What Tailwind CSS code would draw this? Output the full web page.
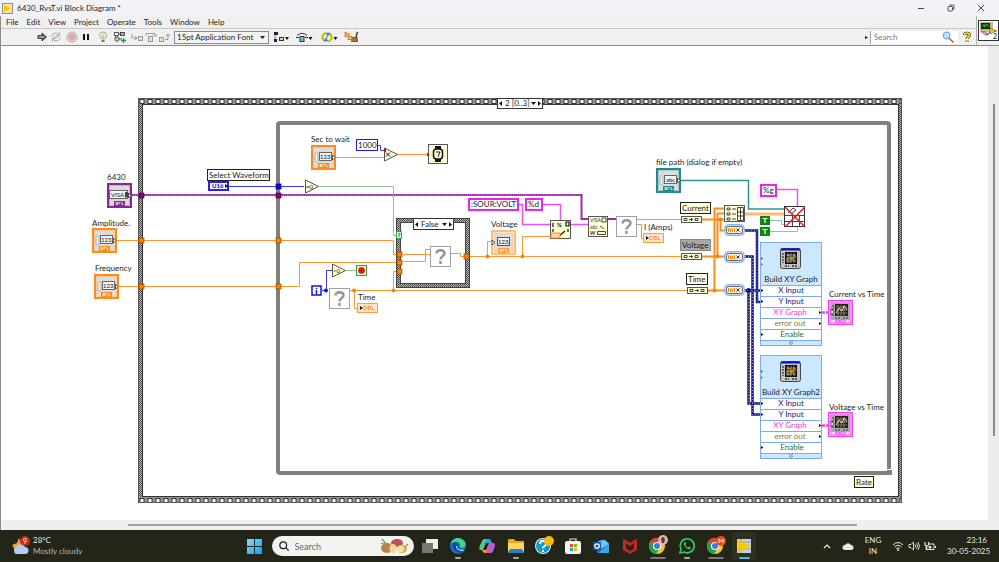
<!DOCTYPE html>
<html lang="en">
<head>
    <meta charset="UTF-8">
    <meta name="viewport" content="width=device-width, initial-scale=1.0">
    <title>6430_RvsT.vi Block Diagram</title>
    <script src="https://cdn.jsdelivr.net/npm/@tailwindcss/browser@4"></script>
</head>
<body class="flex h-screen flex-col overflow-hidden bg-[#f0f0f0] font-['Lato',sans-serif] text-[8px] text-[#1c1c1c]">

    <!-- Title bar -->
    <header class="flex h-[16px] shrink-0 items-center bg-[#f1f3f9]">
        <svg class="ml-[2px] size-[11px]" viewBox="0 0 11 11"><rect x=".5" y=".5" width="10" height="10" fill="#fbe9a0" stroke="#8a8f9c"/><path d="M2 2l7 3.500L2 9z" fill="#f8c800"/></svg>
        <h1 class="ml-[4px] flex-1 whitespace-nowrap">6430_RvsT.vi Block Diagram *</h1>
        <div class="mr-[3px] flex">
            <button aria-label="Minimize" class="flex h-[16px] w-[30px] items-center justify-center"><svg class="size-[8px]" viewBox="0 0 8 8"><path d="M1 4.500h6" stroke="#333" stroke-width=".9"/></svg></button>
            <button aria-label="Restore" class="flex h-[16px] w-[30px] items-center justify-center"><svg class="size-[8px]" viewBox="0 0 8 8" fill="none" stroke="#333" stroke-width=".9"><rect x="1" y="2.500" width="4.500" height="4.500" rx="1"/><path d="M2.500 1h3Q7 1 7 2.500v3"/></svg></button>
            <button aria-label="Close" class="flex h-[16px] w-[30px] items-center justify-center"><svg class="size-[8px]" viewBox="0 0 8 8"><path d="M1 1l6 6M7 1L1 7" stroke="#333" stroke-width=".9"/></svg></button>
        </div>
    </header>

    <div class="flex h-[30px] shrink-0 border-b border-l border-[#8c8c8c]">
        <div class="flex min-w-0 flex-1 flex-col">
            <!-- Menu -->
            <nav class="flex h-[13px] items-center gap-[8px] border-b border-[#c8c8c8] pl-[5px]">
                <a href="#">File</a><a href="#">Edit</a><a href="#">View</a><a href="#">Project</a><a href="#">Operate</a><a href="#">Tools</a><a href="#">Window</a><a href="#">Help</a>
            </nav>
            <!-- Toolbar -->
            <div class="flex flex-1 items-center pl-[34px]">
                <div class="flex">
                    <button aria-label="Run" class="w-[14px]"><svg class="h-[12px] w-[14px]" viewBox="0 0 14 12"><path d="M3 4.500h4V2l4.500 4L7 10V7.500H3z" fill="#666" stroke="#222" stroke-width=".8"/><path d="M4 6h5" stroke="#eee" stroke-width=".9"/></svg></button>
                    <button aria-label="Run Continuously" class="w-[14px]"><svg class="h-[12px] w-[14px]" viewBox="0 0 14 12" fill="none" stroke="#a2a2a2" stroke-width="1"><path d="M2.500 5.500C3 2 8 1 10.500 4M11.500 6.500C11 10 6 11 3.500 8M10.500 1.500V4.500H7.500M3.500 10.500V7.500h3"/><path d="M4.500 6h5"/></svg></button>
                </div>
                <div class="ml-[2px] flex">
                    <button aria-label="Abort" class="w-[14px]"><svg class="h-[12px] w-[14px]" viewBox="0 0 14 12"><circle cx="7" cy="6" r="5" fill="#e0d0d0" stroke="#b0a4a4" stroke-width=".8"/><path d="M5.500 3h3l1.500 1.500v3L8.500 9h-3L4 7.500v-3z" fill="#e8a4a4"/></svg></button>
                    <button aria-label="Pause" class="w-[14px]"><svg class="h-[12px] w-[14px]" viewBox="0 0 14 12"><path d="M5 3v6M9 3v6" stroke="#111" stroke-width="2"/></svg></button>
                </div>
                <button aria-label="Highlight Execution" class="ml-[3px] w-[14px]"><svg class="h-[12px] w-[14px]" viewBox="0 0 14 12"><path d="M5.500 8C3.500 6 3 4.500 3.500 3.200 4.500.4 9.500.4 10.500 3.200 11 4.500 10.500 6 8.500 8z" fill="#ece8d0" stroke="#999" stroke-width=".8"/><path d="M5.500 9h3v2h-3z" fill="#777"/><path d="M6 7.500L7 4l1 3.500" stroke="#b9a860" stroke-width=".6" fill="none"/></svg></button>
                <button aria-label="Retain Wire Values" class="ml-[3px] w-[14px]"><svg class="h-[12px] w-[14px]" viewBox="0 0 14 12" fill="none" stroke="#333" stroke-width=".8"><rect x="1.500" y="1.500" width="4" height="3" fill="#fff"/><rect x="7.500" y="1.500" width="4" height="3" fill="#9ab"/><circle cx="4" cy="8" r="2.200" fill="#ccc"/><path d="M5.500 3h2M3 5v2M6 8h3"/><path d="M8 9.500h5M10.500 7v5" stroke="#1aa01a" stroke-width="1.300"/></svg></button>
                <div class="ml-[3px] flex">
                    <button aria-label="Step Into" class="w-[14px]"><svg class="h-[12px] w-[14px]" viewBox="0 0 14 12" fill="none" stroke="#9a9a9a"><path d="M2 3v4h5M5 5l2 2-2 2"/><rect x="8.500" y="5.500" width="4" height="4" fill="#e6e2b4"/></svg></button>
                    <button aria-label="Step Over" class="w-[14px]"><svg class="h-[12px] w-[14px]" viewBox="0 0 14 12" fill="none" stroke="#9a9a9a"><path d="M2 5V2.500h9V5M9 3.500l2 2 2-2"/><rect x="4.500" y="5.500" width="4" height="5" fill="#e6e2b4"/></svg></button>
                    <button aria-label="Step Out" class="w-[14px]"><svg class="h-[12px] w-[14px]" viewBox="0 0 14 12" fill="none" stroke="#9a9a9a"><rect x="1.500" y="6.500" width="4" height="4" fill="#e6e2b4"/><path d="M7 8.500h3V3M8 5l2-2 2 2"/></svg></button>
                </div>
                <label class="relative ml-[2px] block">
                    <select aria-label="Text settings" class="block h-[13px] w-[95px] appearance-none border border-[#8a8a8a] bg-[#f4f4f4] pl-[2px] text-[8px] leading-[11px]"><option>15pt Application Font</option></select>
                    <svg class="absolute top-[5px] right-[4px] h-[3px] w-[5px]" viewBox="0 0 5 3"><path d="M0 0h5L2.500 3z" fill="#222"/></svg>
                </label>
                <div class="ml-[4px] flex gap-[6px]">
                    <button aria-label="Align Objects"><svg class="h-[12px] w-[17px]" viewBox="0 0 17 12"><path d="M1 1h4v3H1zM1 8h3v3H1z" fill="#223"/><path d="M2 4v4" stroke="#39c"/><rect x="6.500" y="6.500" width="4" height="3" fill="#d8d8a0" stroke="#333"/><path d="M12 6h4l-2 3z" fill="#111"/></svg></button>
                    <button aria-label="Distribute Objects"><svg class="h-[12px] w-[17px]" viewBox="0 0 17 12"><path d="M1 4.500Q6 0 11 4.500" fill="none" stroke="#333"/><path d="M0 6.500h3M9 6.500h3" fill="none" stroke="#333"/><rect x="4" y="5.500" width="4" height="5" fill="#7cc4cc" stroke="#333"/><path d="M12.500 6h4l-2 3z" fill="#111"/></svg></button>
                </div>
                <button aria-label="Reorder" class="ml-[8px]"><svg class="h-[12px] w-[17px]" viewBox="0 0 17 12" fill="none"><path d="M5 2C1 3 0 8 4 10M7 10.500c4-1 5-6 1-8" stroke="#d0b800" stroke-width="2"/><path d="M5 2.500h3l-2 3M7 9.500H4l2-3" stroke="#2a8cb0" stroke-width="1.500"/><path d="M12.500 6h4l-2 3z" fill="#111"/></svg></button>
                <button aria-label="Clean Up Diagram" class="ml-[6px]"><svg class="h-[12px] w-[15px]" viewBox="0 0 15 12"><path d="M1 1l5 2.500L1 6zM4 5.500h4v3H4z" fill="#f0d020" stroke="#c33" stroke-width=".6"/><path d="M13.500 1L12 6" stroke="#5a3a10" stroke-width="1.500"/><path d="M8 6h5.500l.5 5H7z" fill="#8a5a20"/><path d="M9 7v3M11 7v3" stroke="#dcb060" stroke-width=".7"/></svg></button>
                <form class="ml-auto flex items-center" onsubmit="return false">
                    <svg class="mr-[2px] h-[5px] w-[3px]" viewBox="0 0 3 5"><path d="M0 1l3 1.500L0 4z" fill="#111"/></svg>
                    <label class="flex h-[13px] w-[88px] items-center border-l border-[#a0a0a0] bg-white pr-[4px]">
                        <input type="text" aria-label="Search" placeholder="Search" class="h-[11px] min-w-0 flex-1 pl-[3px] text-[8px] outline-none placeholder:text-[#777]">
                        <svg class="size-[12px]" viewBox="0 0 12 12"><path d="M7 7l4 4" stroke="#b5651d" stroke-width="1.600" stroke-linecap="round"/><circle cx="4.500" cy="4.500" r="3.300" fill="#bfe2fa" stroke="#6da7dc" stroke-width="1.200"/></svg>
                    </label>
                </form>
                <button aria-label="Help" class="mr-[4px] ml-[4px]"><svg class="h-[12px] w-[10px]" viewBox="0 0 10 12" fill="none"><path d="M2.500 4C2.500 1.500 7.500 1.500 7.500 4 7.500 6 5 6 5 8M5 9.500v1.500" stroke="#333" stroke-width="3"/><path d="M2.500 4C2.500 1.500 7.500 1.500 7.500 4 7.500 6 5 6 5 8M5 9.500v1.500" stroke="#f2e200" stroke-width="1.800"/></svg></button>
            </div>
        </div>
        <!-- VI icon -->
        <div class="w-[23px] border-l border-[#b0b0b0] pt-[4px] pl-px">
            <svg class="size-[21px]" viewBox="0 0 21 21"><rect x=".5" y=".5" width="20" height="20" fill="#fff" stroke="#333"/><rect x="2" y="2" width="13" height="10" fill="#c9b1a0"/><rect x="3" y="3" width="9" height="6" fill="#082808"/><path d="M4 7l2-3 1 3 2-3 2 3" fill="none" stroke="#28e038" stroke-width=".9"/><path d="M3 12h4l2 2 5-3h5" fill="none" stroke="#e03030"/><path d="M5 13l3 2 3-1" fill="none" stroke="#3060e0"/><path d="M12 8l6 3-6 3z" fill="#f0d800" stroke="#333" stroke-width=".5"/><text x="15" y="19" font-size="7" fill="#111">2</text></svg>
        </div>
    </div>

    <div class="flex min-h-0 flex-1 border-l border-[#8c8c8c]">
        <!-- Block diagram canvas -->
        <main class="relative min-w-0 flex-1 overflow-hidden bg-white">
            <svg class="block h-[474px] w-[987px]" viewBox="1 46 987 474" fill="none">
                <defs>
                    <pattern id="film" x="138" y="98" width="8" height="7" patternUnits="userSpaceOnUse"><rect width="8" height="7" fill="#949494"/><rect x="2" y="1.500" width="4" height="4" fill="#fff" stroke="#333"/></pattern>
                    <pattern id="film-bottom" x="138" y="497" width="8" height="7" patternUnits="userSpaceOnUse"><rect width="8" height="7" fill="#949494"/><rect x="2" y="1.500" width="4" height="4" fill="#fff" stroke="#333"/></pattern>
                    <pattern id="hatch" width="2" height="2" patternUnits="userSpaceOnUse"><rect width="2" height="2" fill="#b8b8b8"/><path d="M0 0h1v1H0zM1 1h1v1H1z" fill="#4a4a4a"/></pattern>
                    <g id="control">
                        <rect x="1" y="1" width="23" height="23" fill="#fff" stroke="currentColor" stroke-width="2"/>
                        <rect x="2.500" y="2.500" width="20" height="20" fill="#dcdcdc" stroke="currentColor" stroke-opacity=".35"/>
                        <rect x="4" y="8" width="3" height="9" rx="1.500" fill="#eee" stroke="#999" stroke-width=".7"/>
                        <rect x="8.500" y="7.500" width="12" height="8" fill="#f4f4f4" stroke="#666"/>
                        <path d="M21.500 10l2.500 2.500-2.500 2.500z" fill="#fff" stroke="#333" stroke-width=".8"/>
                        <rect x="7" y="18" width="11" height="5" fill="currentColor"/>
                        <path d="M9 21.500v-2h1.500v2zM12 21.500v-2h1.500M15 19v2.500h1.500" stroke="#fff" stroke-width=".8"/>
                    </g>
                    <g id="graph-control">
                        <rect x="1.500" y="1.500" width="22" height="22" fill="#ddd" stroke="#ff90ff" stroke-width="3"/>
                        <rect x=".5" y=".5" width="24" height="24" stroke="#f040f0"/>
                        <rect x="3" y="3" width="19" height="17" fill="#a8a8a8"/>
                        <rect x="7" y="4" width="13" height="12" fill="#2a2018"/>
                        <path d="M8 7h11M8 10h11M8 13h11M10 5v11M13 5v11M16 5v11" stroke="#a89878" stroke-width=".7"/>
                        <path d="M8 13l3-5 3 3 2-5 3 4" stroke="#fff" stroke-width=".8"/>
                        <path d="M5 5v11M7 18h5M15 18h5" stroke="#333" stroke-dasharray="2 1"/>
                        <path d="M3 9l3 3-3 3z" fill="#fff" stroke="#333" stroke-width=".8"/>
                        <path d="M8 20h3v2H8zM12 20h5v2h-5z" fill="#fff" stroke="#f040f0"/>
                    </g>
                    <g id="plot-icon">
                        <rect x=".5" y=".5" width="20" height="20" rx="2" fill="#c4c4c4" stroke="#444"/>
                        <path d="M1 1.500h19" stroke="#1010c0" stroke-width="2"/>
                        <rect x="5" y="4" width="12" height="12" fill="#111"/>
                        <path d="M6 7h10M6 10h10M6 13h10M8 5v10M11 5v10M14 5v10" stroke="#bbb" stroke-width=".7"/>
                        <path d="M6 12l3-2 2 2 3-5 2 2M7 7l3 1 4 5M7 14l3-1" stroke="#e0b000" stroke-width=".9"/>
                        <path d="M3 5v10M5 18h4M12 18h5" stroke="#333" stroke-width="1.300" stroke-dasharray="2 1"/>
                    </g>
                    <g id="converter"><rect x=".5" y=".5" width="20" height="6" fill="#ffffd8" stroke="#555"/><path d="M3 2.500h3v2H3zM14 2.500h3v2h-3zM8 3.500h4M10.500 2v3" stroke="#333" stroke-width=".9"/></g>
                    <g id="dynamic"><rect x=".5" y=".5" width="20" height="11" rx="4" fill="#b8d4ff" stroke="#8ab4f0"/><rect x="2.500" y="2.500" width="16" height="7" rx="2" fill="#fff4d0" stroke="#667"/><path d="M4.500 4v4M6.500 8V5h2v3M10.500 4v4" stroke="#ff8000"/><path d="M12.500 4.500l3 3M15.500 4.500l-3 3" stroke="#224" stroke-width=".9"/></g>
                    <g id="unknown"><rect x=".5" y=".5" width="20" height="20" fill="#fff" stroke="#a0a0a0"/><path d="M6.500 7.500C6.500 3 14.500 3 14.500 7.500 14.500 10 10.500 10 10.500 13.500M10.500 15v3" stroke="#969696" stroke-width="2.500"/></g>
                    <g id="dbl"><rect x=".5" y=".5" width="20" height="9" fill="#fff" stroke="#ff9c40"/><rect x="2" y="2" width="17" height="6" stroke="#ffc890"/><path d="M3 3l3 2-3 2z" fill="#111"/></g>
                </defs>

                <!-- Stacked sequence frame -->
                <path d="M138 98H902V503H138zM143 105V496H898V105z" fill="url(#hatch)" fill-rule="evenodd"/>
                <rect x="138" y="98" width="764" height="7" fill="url(#film)"/>
                <rect x="138" y="497" width="764" height="6" fill="url(#film-bottom)"/>
                <rect x="138.500" y="98.500" width="763" height="404" stroke="#555"/>
                <rect x="142.500" y="104.500" width="756" height="392" stroke="#333"/>

                <!-- While loop -->
                <rect x="278" y="123" width="611" height="350" rx="2" stroke="#808080" stroke-width="4"/>
                <path d="M887 469.500h4" stroke="#fff"/><path d="M887 470h5v5h-5z" fill="#808080"/>

                <!-- Numeric wires -->
                <g stroke="#ff9632">
                    <path d="M116 240.500H393.500V254.500H399M118 286.500H299.500V262.500H399M335 157.500H384M397 154.500H428"/>
                    <path d="M350 290.500H687M354.500 290V308.500H357M393.500 290V271.500H399"/>
                    <path d="M470 256.500H682M487.500 256V241.500H492M522.500 256V236.500H550M637 219.500H682M637 224.500H641.500V238.500H644"/>
                    <path d="M702 219.500H724M702 256.500H724M707 290.500H724M714.500 290V208.500H724M717.500 256V213.500H724M720.500 219V230.500H724" stroke="#ff8c1a" stroke-width="2"/>
                    <path d="M744 214H785" stroke="#ffb878" stroke-width="3"/>
                </g>
                <g fill="#ff8000"><circle cx="354" cy="290.500" r="2"/><circle cx="393.500" cy="290.500" r="2"/><circle cx="487.500" cy="256.500" r="2"/><circle cx="522.500" cy="256.500" r="2"/><circle cx="714.500" cy="290.500" r="2"/><circle cx="717.500" cy="256.500" r="2"/><circle cx="720.500" cy="219.500" r="2"/></g>

                <!-- VISA, path, string, boolean and integer wires -->
                <path d="M131 195H581.500V219H588M608 219H617" stroke="#9c2ca0" stroke-width="2"/>
                <path d="M131 195H581" stroke="#e0b0e0" stroke-width=".7" stroke-dasharray="1 1"/>
                <path d="M680 180.500H748.500V209H785" stroke="#2a9490" stroke-width="1.500"/>
                <path d="M518 204.500H522.500V224.500H550M542 204.500H560.500V221M571 224.500H588M776 189.500H797.500V206" stroke="#f050f0" stroke-width="1.500"/>
                <path d="M318 186.500H393.500V235.500H399M346 270.500H356M770 220.500H781.500V224.500H785M770 231.500H797.500V227" stroke="#94c494"/>
                <path d="M229 186.500H304M377 145.500H380.500V150.500H384M322 290.500H326.500V270.500H332" stroke="#3838ff"/>
                <circle cx="326" cy="290.500" r="2" fill="#1010e0"/>

                <!-- Dynamic data wires -->
                <path d="M745 230.500H757V302H760M745 256.500H752.500V414.500H760M745 290.500H760M748.500 290V403.500H760" stroke="#181884" stroke-width="2.500"/>
                <path d="M745 230.500H757V302H760M745 256.500H752.500V414.500H760M745 290.500H760M748.500 290V403.500H760" stroke="#a8a8e0" stroke-width=".8" stroke-dasharray="1 2"/>
                <circle cx="748.500" cy="290.500" r="2.500" fill="#181884"/>
                <path d="M822 312.500H830M822 425.500H830" stroke="#f040f0" stroke-width="2.500" stroke-dasharray="3 1"/>

                <!-- Case structure -->
                <rect x="399" y="221" width="69" height="65" stroke="url(#hatch)" stroke-width="4"/>
                <rect x="396.500" y="218.500" width="73" height="69" stroke="#444"/>
                <rect x="400.500" y="222.500" width="65" height="61" stroke="#444"/>
                <path d="M403 254.500H430M403 261.500H425.500V249.500H430M451 253.500H460.500V256.500H464" stroke="#ff9632"/>

                <!-- Tunnels -->
                <g fill="#ff8000" stroke="#8a4a00" stroke-width=".7">
                    <rect x="139" y="238" width="5" height="5"/><rect x="139" y="284" width="5" height="5"/>
                    <rect x="276" y="238" width="5" height="5"/><rect x="276" y="284" width="5" height="5"/>
                    <rect x="397" y="252" width="5" height="5"/><rect x="397" y="260" width="5" height="5"/><rect x="397" y="269" width="5" height="5"/><rect x="464" y="254" width="5" height="5"/>
                </g>
                <path d="M139 193h5v5h-5zM276 193h5v5h-5z" fill="#800080" stroke="#400040" stroke-width=".7"/>
                <rect x="276" y="184" width="5" height="5" fill="#0000f0" stroke="#000080" stroke-width=".7"/>
                <rect x="396.500" y="231.500" width="5" height="7" fill="#d8f4d8" stroke="#40a840"/><path d="M398 233.500h2v1.500h-1v2" stroke="#208020" stroke-width=".7"/>

                <!-- Front panel terminals -->
                <use href="#control" x="107" y="183" color="#8e2499"/>
                <use href="#control" x="92" y="228" color="#ff8c1a"/>
                <use href="#control" x="94" y="274" color="#ff8c1a"/>
                <use href="#control" x="311" y="145" color="#ff8c1a"/>
                <use href="#control" x="656" y="168" color="#1f8c8c"/>
                <g transform="translate(491 230)">
                    <rect x="1" y="1" width="23" height="23" fill="#fff" stroke="#ffa850" stroke-width="1.500"/>
                    <rect x="3" y="3" width="19" height="19" fill="#dcdcdc" stroke="#ffc890"/>
                    <rect x="6.500" y="7.500" width="12" height="8" fill="#f4f4f4" stroke="#555"/>
                    <path d="M1 10l3 2.500L1 15z" fill="#fff" stroke="#333" stroke-width=".8"/>
                    <rect x="7" y="18" width="11" height="5" fill="#ff9c3c"/><path d="M9 21.500v-2h1.500v2zM12 21.500v-2h1.500M15 19v2.500h1.500" stroke="#fff" stroke-width=".8"/>
                </g>
                <rect x="109.500" y="190.500" width="18" height="8" fill="#f4f4f4" stroke="#666"/>
                <path d="M125 192h2l2 2.500-2 3h-2z" fill="#444"/>
                <g fill="#111" font-size="6">
                    <text x="111" y="197">VISA</text>
                    <text x="101" y="242">123</text>
                    <text x="103" y="288">123</text>
                    <text x="320" y="159">123</text>
                    <text x="498" y="244">123</text>
                    <text x="666" y="182">abc</text>
                </g>
                <use href="#graph-control" x="828" y="300"/>
                <use href="#graph-control" x="828" y="412"/>
                <use href="#dbl" x="357" y="303"/>
                <use href="#dbl" x="643" y="233"/>
                <g fill="#ff8000" font-size="6" font-weight="700"><text x="363" y="310">DBL</text><text x="649" y="240">DBL</text></g>
                <rect x="209" y="182" width="19" height="8" fill="#fff" stroke="#2020ff" stroke-width="2"/><path d="M225 184l3 2-3 2z" fill="#111"/>
                <text x="212" y="188" font-size="6" font-weight="700" fill="#0000d0">U16</text>

                <!-- Functions -->
                <g fill="#ffffd8" stroke="#555">
                    <path d="M305.500 180v13l13-6.500zM384.500 148v13l13-6.500zM332.500 264v13l13-6.500z"/>
                    <rect x="428.500" y="144.500" width="19" height="19"/>
                    <rect x="550.500" y="220.500" width="20" height="18"/>
                    <rect x="588.500" y="216.500" width="19" height="20"/>
                    <rect x="724.500" y="205.500" width="20" height="16"/>
                </g>
                <g fill="#111" font-size="6"><text x="306" y="189">=0</text><text x="333" y="273">&lt;0</text></g>
                <path d="M386 152.500l4 4M390 152.500l-4 4" stroke="#111"/>
                <path d="M384 149h2v3h-2zM427 153h2v3h-2z" fill="#f00000"/>
                <path d="M435 146h6v3h-6zM435 159h6v3h-6z" fill="#111"/><rect x="433.500" y="149" width="9" height="10" rx="3" fill="#ffffd8" stroke="#111" stroke-width="1.500"/><path d="M436 152h4l-2 5" stroke="#111" stroke-width=".9"/>
                <path d="M553 223v4M553 229v3M568 229v3M566 222h3v4h-3zM558 237l7-6" stroke="#111" stroke-width="1.200"/><text x="557" y="227" font-size="6" font-weight="700" fill="#111">%</text><rect x="551" y="233" width="9" height="5" fill="#ffd8a8" stroke="#ff8c1a"/>
                <g fill="#333" font-size="5"><text x="590" y="222">VISA</text><text x="590" y="229">abc</text><text x="590" y="235" font-weight="700">W</text></g>
                <path d="M600 226l4 3M597.500 231.500h8v3h-8zM602 218h4v4h-4z" stroke="#333" stroke-width=".9"/>
                <path d="M727 208h3v2h-3zM727 213h3v2h-3zM727 218h3v2h-3zM732 209h4M732 214h4M732 219h4M737.500 207.500h6v13h-6zM740.500 208v12M738 212h5M738 216h5" stroke="#333" stroke-width=".9"/>
                <use href="#unknown" x="329" y="288"/>
                <use href="#unknown" x="430" y="246"/>
                <use href="#unknown" x="616" y="216"/>
                <use href="#converter" x="681" y="216"/>
                <use href="#converter" x="681" y="253"/>
                <use href="#converter" x="687" y="287"/>
                <use href="#dynamic" x="724" y="224"/>
                <use href="#dynamic" x="724" y="251"/>
                <use href="#dynamic" x="724" y="284"/>
                <rect x="784.500" y="206.500" width="20" height="20" fill="#fff" stroke="#333"/>
                <path d="M785 215.500h20M785 221.500h20M792.500 216v11M799.500 216v11M788 213l5-5 3 2-5 4" stroke="#333" stroke-width=".9"/>
                <path d="M785 207l20 20M805 207l-20 20" stroke="#f01818" stroke-width="1.500"/>

                <!-- Loop terminals -->
                <rect x="312" y="286" width="9" height="9" fill="#fff" stroke="#1010e0" stroke-width="1.500"/><path d="M316.500 288v1M316.500 290v4" stroke="#1010e0" stroke-width="1.500"/>
                <rect x="356.500" y="265.500" width="10" height="10" fill="#d8f0d8" stroke="#40a040"/><circle cx="361.500" cy="270.500" r="3.300" fill="#f01010"/>

                <!-- Constants -->
                <rect x="356.500" y="139.500" width="21" height="11" fill="#fff" stroke="#1818f0"/>
                <g fill="#fff" stroke="#f020f0" stroke-width="2"><rect x="469" y="199" width="49" height="11"/><rect x="526" y="199" width="16" height="11"/><rect x="761" y="185" width="15" height="11"/></g>
                <g fill="#0a8a0a"><rect x="760" y="216" width="10" height="9"/><rect x="760" y="227" width="10" height="9"/></g>
                <path d="M762.500 218.500h5M765 218.500v4.500M762.500 229.500h5M765 229.500v4.500" stroke="#fff" stroke-width="1.200"/>

                <!-- Label boxes -->
                <rect x="207.500" y="169.500" width="62" height="11" fill="#fff" stroke="#222"/>
                <g fill="#ffffe0" stroke="#222"><rect x="680.500" y="202.500" width="30" height="11"/><rect x="686.500" y="273.500" width="21" height="11"/><rect x="854.500" y="476.500" width="19" height="11"/></g>
                <rect x="680.500" y="239.500" width="30" height="11" fill="#a8a8a8" stroke="#888"/>

                <!-- Build XY Graph express VIs -->
                <g id="graph-1">
                    <rect x="760.500" y="242.500" width="61" height="103" fill="#cce8ff" stroke="#7ca8f4"/>
                    <rect x="761" y="285" width="60" height="55" fill="#fff"/>
                    <path d="M761 285.500h60M761 296.500h60M761 307.500h60M761 318.500h60M761 329.500h60M761 340.500h60" stroke="#7ca8f4"/>
                    <use href="#plot-icon" x="780" y="248"/>
                    <path d="M789 341l2 1.500 2-1.500M789 343l2 1.500 2-1.500" stroke="#889"/>
                    <path d="M761 257l2 1.500-2 1.500z" fill="#0a8a0a"/><path d="M761 263l2 1.500-2 1.500z" fill="#8a8000"/>
                    <path d="M761 289l2.500 1.500-2.500 1.500zM761 300l2.500 1.500-2.500 1.500zM819 311l2.500 1.500-2.500 1.500zM819 322l2.500 1.500-2.500 1.500zM761 333l2.500 1.500-2.500 1.500z" fill="#111"/>
                </g>
                <use href="#graph-1" y="113"/>
                <g font-size="8" text-anchor="middle">
                    <text x="791" y="282" fill="#222">Build XY Graph</text>
                    <text x="791" y="293" fill="#181884">X Input</text>
                    <text x="791" y="304" fill="#181884">Y Input</text>
                    <text x="790" y="315" fill="#f030f0">XY Graph</text>
                    <text x="790" y="326" fill="#867c10">error out</text>
                    <text x="792" y="337" fill="#0a8020">Enable</text>
                    <text x="791" y="395" fill="#222">Build XY Graph2</text>
                    <text x="791" y="406" fill="#181884">X Input</text>
                    <text x="791" y="417" fill="#181884">Y Input</text>
                    <text x="790" y="428" fill="#f030f0">XY Graph</text>
                    <text x="790" y="439" fill="#867c10">error out</text>
                    <text x="792" y="450" fill="#0a8020">Enable</text>
                </g>

                <!-- Labels -->
                <g fill="#1c1c1c" font-size="8">
                    <text x="107" y="180">6430</text>
                    <text x="92" y="226">Amplitude.</text>
                    <text x="95" y="271">Frequency</text>
                    <text x="209" y="178">Select Waveform</text>
                    <text x="311" y="142">Sec to wait</text>
                    <text x="358" y="148">1000</text>
                    <text x="358" y="300">Time</text>
                    <text x="471" y="207">:SOUR:VOLT</text>
                    <text x="528" y="207">%d</text>
                    <text x="763" y="193">%g</text>
                    <text x="491" y="227">Voltage</text>
                    <text x="644" y="230">I (Amps)</text>
                    <text x="656" y="165">file path (dialog if empty)</text>
                    <text x="682" y="211">Current</text>
                    <text x="682" y="248">Voltage</text>
                    <text x="688" y="282">Time</text>
                    <text x="829" y="297">Current vs Time</text>
                    <text x="829" y="410">Voltage vs Time</text>
                    <text x="856" y="485">Rate</text>
                </g>
            </svg>

            <!-- Frame and case selectors -->
            <div class="absolute top-[52px] left-[496px] flex h-[11px] w-[46px] items-center border border-[#333] bg-white">
                <button aria-label="Previous frame" class="w-[6px]"><svg class="h-[7px] w-[5px]" viewBox="0 0 5 7"><path d="M4 1L1 3.500 4 6z" fill="#111"/></svg></button>
                <select aria-label="Sequence frame" class="h-[9px] min-w-0 flex-1 appearance-none pl-px text-[8px] leading-[9px]"><option>2 [0..3]</option></select>
                <svg class="mr-px h-[3px] w-[5px]" viewBox="0 0 5 3"><path d="M0 0h5L2.500 3z" fill="#111"/></svg>
                <button aria-label="Next frame" class="w-[5px]"><svg class="h-[7px] w-[5px]" viewBox="0 0 5 7"><path d="M1 1l3 2.500L1 6z" fill="#111"/></svg></button>
            </div>
            <div class="absolute top-[172px] left-[412px] flex h-[12px] w-[41px] items-center border border-[#333] bg-white">
                <button aria-label="Previous case" class="w-[6px]"><svg class="h-[7px] w-[5px]" viewBox="0 0 5 7"><path d="M4 1L1 3.500 4 6z" fill="#111"/></svg></button>
                <select aria-label="Case" class="h-[10px] min-w-0 flex-1 appearance-none pl-px text-[8px] leading-[10px]"><option>False</option></select>
                <svg class="mr-px h-[3px] w-[5px]" viewBox="0 0 5 3"><path d="M0 0h5L2.500 3z" fill="#111"/></svg>
                <button aria-label="Next case" class="w-[5px]"><svg class="h-[7px] w-[5px]" viewBox="0 0 5 7"><path d="M1 1l3 2.500L1 6z" fill="#111"/></svg></button>
            </div>
        </main>
        <!-- Vertical scroll bar -->
        <div class="flex w-[11px] flex-col items-center bg-[#ececec] pt-[58px] pb-[84px]"><div class="w-[2px] flex-1 bg-[#8c8c8c]"></div></div>
    </div>
    <!-- Horizontal scroll bar -->
    <div class="flex h-[10px] shrink-0 items-center border-l border-[#8c8c8c] bg-[#efefef] pr-[142px] pl-[127px]"><div class="h-[2px] flex-1 bg-[#a0a0a0]"></div></div>

    <!-- Taskbar -->
    <footer class="flex h-[32px] shrink-0 items-center bg-[#222517] text-[8px] leading-[11px] text-[#e6e6e0]">
        <div class="flex flex-1 items-center pl-[11px]">
            <svg class="h-[20px] w-[20px]" viewBox="0 0 20 20"><path d="M8 2l1.500 4L14 8l-3 6H4L1 9l5-2z" fill="#f5a623"/><path d="M5 18a4 4 0 010-7 5 5 0 019 0 3.500 3.500 0 010 7z" fill="#b4cdf4"/><circle cx="14" cy="5" r="5" fill="#c42b1c"/><text x="12" y="8" font-size="7" fill="#fff">9</text></svg>
            <div class="ml-[2px]"><p>28°C</p><p class="text-[#b8b8b0]">Mostly cloudy</p></div>
        </div>
        <div class="ml-[7px] flex items-center">
            <button aria-label="Start"><svg class="size-[15px]" viewBox="0 0 15 15"><defs><linearGradient id="win" x2="1" y2="1"><stop stop-color="#7fdcff"/><stop offset="1" stop-color="#1a9cf0"/></linearGradient></defs><path d="M0 0h7v7H0zM8 0h7v7H8zM0 8h7v7H0zM8 8h7v7H8z" fill="url(#win)"/></svg></button>
            <label class="ml-[10px] flex h-[20px] w-[142px] items-center rounded-full bg-[#f2f2f0] pr-[4px] pl-[7px]">
                <svg class="size-[10px]" viewBox="0 0 10 10" fill="none" stroke="#222" stroke-width="1.200"><circle cx="4.200" cy="4.200" r="3.400"/><path d="M6.700 6.700l3 3"/></svg>
                <input type="text" aria-label="Search Windows" placeholder="Search" class="ml-[6px] min-w-0 flex-1 text-[9px] outline-none placeholder:text-[#666]">
                <svg class="h-[16px] w-[30px]" viewBox="0 0 30 16"><path d="M2 1l5 6M28 6l-6 6M1 5l5 2" stroke="#7a9a50" stroke-width="1.200"/><ellipse cx="17" cy="5" rx="6" ry="4" fill="#c0504c"/><ellipse cx="7" cy="10" rx="6" ry="5" fill="#b8834a"/><ellipse cx="13" cy="10.500" rx="3.500" ry="4.500" fill="#f0d8a0"/><ellipse cx="22" cy="11" rx="5" ry="4" fill="#d8a850"/><ellipse cx="20.500" cy="11" rx="3.500" ry="3.500" fill="#f4e0a0"/></svg>
            </label>
            <nav class="ml-[2px] grid w-[343px] grid-cols-12 justify-items-center">
                <button aria-label="Task View"><svg class="h-[28px] w-[20px]" viewBox="0 -2 20 28"><rect x="6" y="5" width="12" height="10" fill="#eee"/><rect x="2" y="9" width="11" height="10" fill="#77776e"/></svg></button>
                <button aria-label="Edge"><svg class="h-[28px] w-[20px]" viewBox="0 -2 20 28"><circle cx="10" cy="12" r="8" fill="#1470c8"/><path d="M2.500 10C4 3 14 1.500 17.500 9c1 4-3 6-6 4 2-3-1-6-5-5-2 .3-3 1-4 2z" fill="#42d48c"/><path d="M5 9c-2 6 4 11 10 9-4-1-7-3-5-7-1-3-4-3-5-2z" fill="#0a4a98"/><path d="M8.500 12c-1 3 3 5 7 4" stroke="#d8f0ff" fill="none"/><path d="M8 24h4" stroke="#aaa" stroke-width="2" stroke-linecap="round"/></svg></button>
                <button aria-label="Copilot"><svg class="h-[28px] w-[20px]" viewBox="0 -2 20 28"><path d="M7 5h5c2 0 2 3 3 4H9L6 16H4c-2 0-2-2-1.500-4z" fill="#28a8e8"/><path d="M3 12l2-5c1-2 2-2 4-2L6 16H5c-2 0-2.500-1-2-4z" fill="#58c878"/><path d="M12 9h4c2 0 2 2 1.500 4l-1 3c-1 3-2 3-4 3H8c-2 0-2-2-3-3h4z" fill="#e05898"/><path d="M14 9h2c2 0 2 2 1.500 4l-1 3-4 3z" fill="#9868f0"/><path d="M5 16h5l-1 3c-2 0-3-1-4-3z" fill="#f0a030"/></svg></button>
                <button aria-label="File Explorer"><svg class="h-[28px] w-[20px]" viewBox="0 -2 20 28"><path d="M2 6q0-1 1-1h5l2 2h7q1 0 1 1v11H2z" fill="#e8a818"/><path d="M2 9h16v8H2z" fill="#ffd45c"/><path d="M4 15h12l2 4H2z" fill="#2480d0"/><path d="M8 24h4" stroke="#aaa" stroke-width="2" stroke-linecap="round"/></svg></button>
                <button aria-label="Get Help"><svg class="h-[28px] w-[20px]" viewBox="0 -2 20 28"><circle cx="9" cy="12" r="8" fill="#d8f0f8"/><circle cx="9" cy="12" r="7" fill="#1898c8"/><path d="M6 10c0-4 6-4 6 0 0 2-3 2-3 4.500M9 16v2" fill="none" stroke="#fff" stroke-width="1.800"/><circle cx="15" cy="7" r="5" fill="#f8b808"/></svg></button>
                <button aria-label="Store"><svg class="h-[28px] w-[20px]" viewBox="0 -2 20 28"><path d="M7 8V5h6v3" fill="none" stroke="#ddd" stroke-width="1.200"/><rect x="2" y="7" width="16" height="13" rx="2" fill="#f4f4f4"/><path d="M7 10h3v3H7z" fill="#f04a20"/><path d="M11 10h3v3h-3z" fill="#78b820"/><path d="M7 14h3v3H7z" fill="#18a0e8"/><path d="M11 14h3v3h-3z" fill="#f8b808"/></svg></button>
                <button aria-label="Outlook"><svg class="h-[28px] w-[20px]" viewBox="0 -2 20 28"><path d="M5 9l7-4 6 4v9q0 1-1 1H6z" fill="#1468b8"/><path d="M7 7l7-1 4 4-8 5z" fill="#68c8f8"/><path d="M18 10v8q0 1-1 1H7z" fill="#38a8e8"/><rect x="2" y="8" width="8" height="8" rx="1" fill="#0a58a8"/><circle cx="6" cy="12" r="2.200" fill="none" stroke="#fff" stroke-width="1.300"/></svg></button>
                <button aria-label="McAfee"><svg class="h-[28px] w-[20px]" viewBox="0 -2 20 28"><path d="M3 5l7 3.500L17 5v11l-7 4-7-4z" fill="#c02828"/><path d="M6 9.500l4 2.500 4-2.500v5l-4 2.500-4-2.500z" fill="#222517"/></svg></button>
                <button aria-label="Chrome"><svg class="h-[28px] w-[20px]" viewBox="0 -2 20 28"><circle cx="9" cy="12" r="8" fill="#f8c820"/><path d="M9 12L2 8a8 8 0 0114 0z" fill="#e04030"/><path d="M9 12L2 8a8 8 0 006 12l4-6z" fill="#28a048"/><circle cx="9" cy="12" r="4" fill="#fff"/><circle cx="9" cy="12" r="3" fill="#3878e8"/><circle cx="15" cy="6" r="5" fill="#d8b8b0"/><path d="M13 5q2-4 4 0l-1 4h-2z" fill="#6a3030"/><path d="M3 24h14" stroke="#999" stroke-width="1.500" stroke-linecap="round"/></svg></button>
                <button aria-label="WhatsApp"><svg class="h-[28px] w-[20px]" viewBox="0 -2 20 28"><path d="M3 19l1-4a7 7 0 113 3z" fill="none" stroke="#28d060" stroke-width="1.600"/><path d="M7 8.500c-1 3 3 7.500 6 6.500l1-1.500-2-1-1 1c-1 0-2.500-2-2.500-3l.8-.8-.8-1.700z" fill="#28d060"/><path d="M8 24h4" stroke="#aaa" stroke-width="2" stroke-linecap="round"/></svg></button>
                <button aria-label="Chrome, second profile"><svg class="h-[28px] w-[20px]" viewBox="0 -2 20 28"><circle cx="9" cy="12" r="8" fill="#f8c820"/><path d="M9 12L2 8a8 8 0 0114 0z" fill="#e04030"/><path d="M9 12L2 8a8 8 0 006 12l4-6z" fill="#28a048"/><circle cx="9" cy="12" r="4" fill="#fff"/><circle cx="9" cy="12" r="3" fill="#3878e8"/><circle cx="15" cy="7" r="5" fill="#e84c1c"/><path d="M13 9V5l2 2.500L17 5v4" fill="none" stroke="#fff" stroke-width=".9"/><path d="M3 24h14" stroke="#999" stroke-width="1.500" stroke-linecap="round"/></svg></button>
                <button aria-label="LabVIEW" class="rounded-[2px] bg-[#2c2f22] px-[2px]"><svg class="h-[28px] w-[20px]" viewBox="0 -2 20 28"><rect x="3" y="5" width="14" height="14" fill="#c8d0d8"/><path d="M3 8h14M3 15h14M7 5v14" stroke="#8894a0" stroke-width=".8"/><path d="M4 6l13 6-13 6z" fill="#f8c808"/><path d="M6 24h9" stroke="#48b4e8" stroke-width="2" stroke-linecap="round"/></svg></button>
            </nav>
        </div>
        <div class="flex flex-1 items-center justify-end pr-[12px]">
            <svg class="h-[6px] w-[8px]" viewBox="0 0 8 6"><path d="M1 5l3-3 3 3" fill="none" stroke="#eee" stroke-width="1.200"/></svg>
            <svg class="ml-[11px] h-[9px] w-[12px]" viewBox="0 0 12 9"><path d="M3 8a2.500 2.500 0 010-5 3.500 3.500 0 016 0 2.500 2.500 0 010 5z" fill="#e8e8e8"/></svg>
            <div class="ml-[10px] w-[18px] text-center"><p>ENG</p><p>IN</p></div>
            <svg class="ml-[10px] h-[10px] w-[12px]" viewBox="0 0 12 10" fill="none" stroke="#e8e8e8"><path d="M1 4q5-5 10 0M2.500 6q3.500-3.500 7 0M4.300 7.500q1.700-1.500 3.400 0"/><circle cx="6" cy="9" r=".7"/></svg>
            <svg class="ml-[4px] h-[10px] w-[12px]" viewBox="0 0 12 10" fill="none" stroke="#e8e8e8" stroke-width=".9"><path d="M1 3.500h2L5.500 1v8L3 6.500H1zM7 3.500q1.200 1.500 0 3M8.500 2.300q2.200 2.700 0 5.400M10 1q3 4 0 8"/></svg>
            <svg class="ml-[4px] h-[10px] w-[12px]" viewBox="0 0 12 10" fill="none" stroke="#e8e8e8"><path d="M5 3h5v5.500H2V6M11.500 5v2"/><path d="M1 1v3q2 2 3.500 0V1M2.700 5v3" stroke-width="1.200"/><path d="M5 5.500h2V7H5z" fill="#e8e8e8"/></svg>
            <div class="ml-[11px] w-[40px] text-right whitespace-nowrap"><p>23:16</p><p>30-05-2025</p></div>
        </div>
    </footer>
</body>
</html>
